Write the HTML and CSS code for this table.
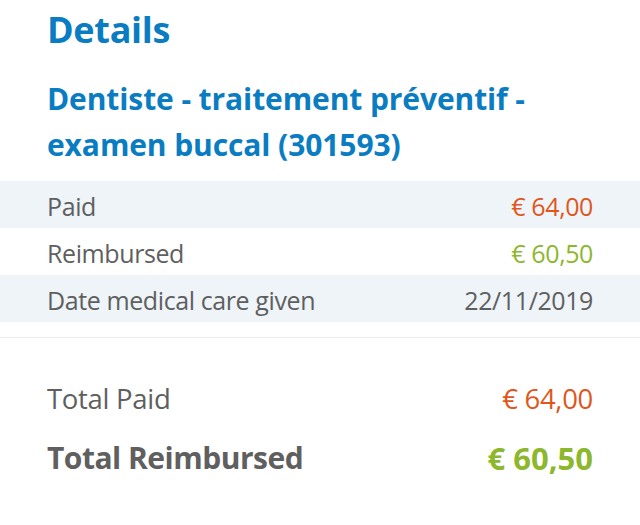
FILE: index.html
```html
<!DOCTYPE html>
<html lang="en">
<head>
<meta charset="utf-8">
<title>Details</title>
<link rel="stylesheet" href="styles.css">
</head>
<body>
<main class="page">
  <h1 class="title">Details</h1>
  <h2 class="subtitle">Dentiste - traitement préventif - examen buccal (301593)</h2>
  <section class="rows">
    <div class="row shaded"><span class="label">Paid</span><span class="value paid">€ 64,00</span></div>
    <div class="row"><span class="label">Reimbursed</span><span class="value reimb">€ 60,50</span></div>
    <div class="row shaded"><span class="label">Date medical care given</span><span class="value">22/11/2019</span></div>
  </section>
  <section class="totals">
    <div class="total"><span class="label">Total Paid</span><span class="value paid">€ 64,00</span></div>
    <div class="total grand"><span class="label">Total Reimbursed</span><span class="value reimb">€ 60,50</span></div>
  </section>
</main>
</body>
</html>
```
FILE: styles.css
```css
html, body {
  margin: 0;
  padding: 0;
  background: #ffffff;
}
body {
  font-family: "Open Sans", "Liberation Sans", sans-serif;
  color: #5f5f5f;
}
.page {
  display: flex;
  flex-direction: column;
}
.title {
  margin: 8px 47px 0;
  font-size: 36px;
  line-height: 44px;
  font-weight: 700;
  color: #0a7dc2;
  letter-spacing: -0.3px;
}
.subtitle {
  margin: 24px 47px 0;
  font-size: 30px;
  line-height: 46px;
  font-weight: 700;
  color: #0a7dc2;
  letter-spacing: -0.1px;
}
.rows {
  margin-top: 13px;
  padding-bottom: 15px;
  border-bottom: 1px solid #ececec;
  display: flex;
  flex-direction: column;
}
.row {
  display: flex;
  justify-content: space-between;
  align-items: center;
  height: 47px;
  padding: 3px 47px 0;
  box-sizing: border-box;
  font-size: 25px;
  letter-spacing: -0.4px;
}
.row.shaded {
  background: #eef4f8;
}
.paid { color: #e0561b; }
.reimb { color: #8db72c; }
.totals {
  padding: 41px 47px 0;
  display: flex;
  flex-direction: column;
  gap: 15px;
}
.total {
  display: flex;
  justify-content: space-between;
  align-items: center;
  font-size: 27.5px;
  line-height: 40px;
  letter-spacing: -0.3px;
}
.total.grand {
  font-size: 30px;
  line-height: 48px;
  font-weight: 700;
  letter-spacing: -0.5px;
}
.total.grand .value {
  font-size: 31px;
  letter-spacing: 0;
}
```
